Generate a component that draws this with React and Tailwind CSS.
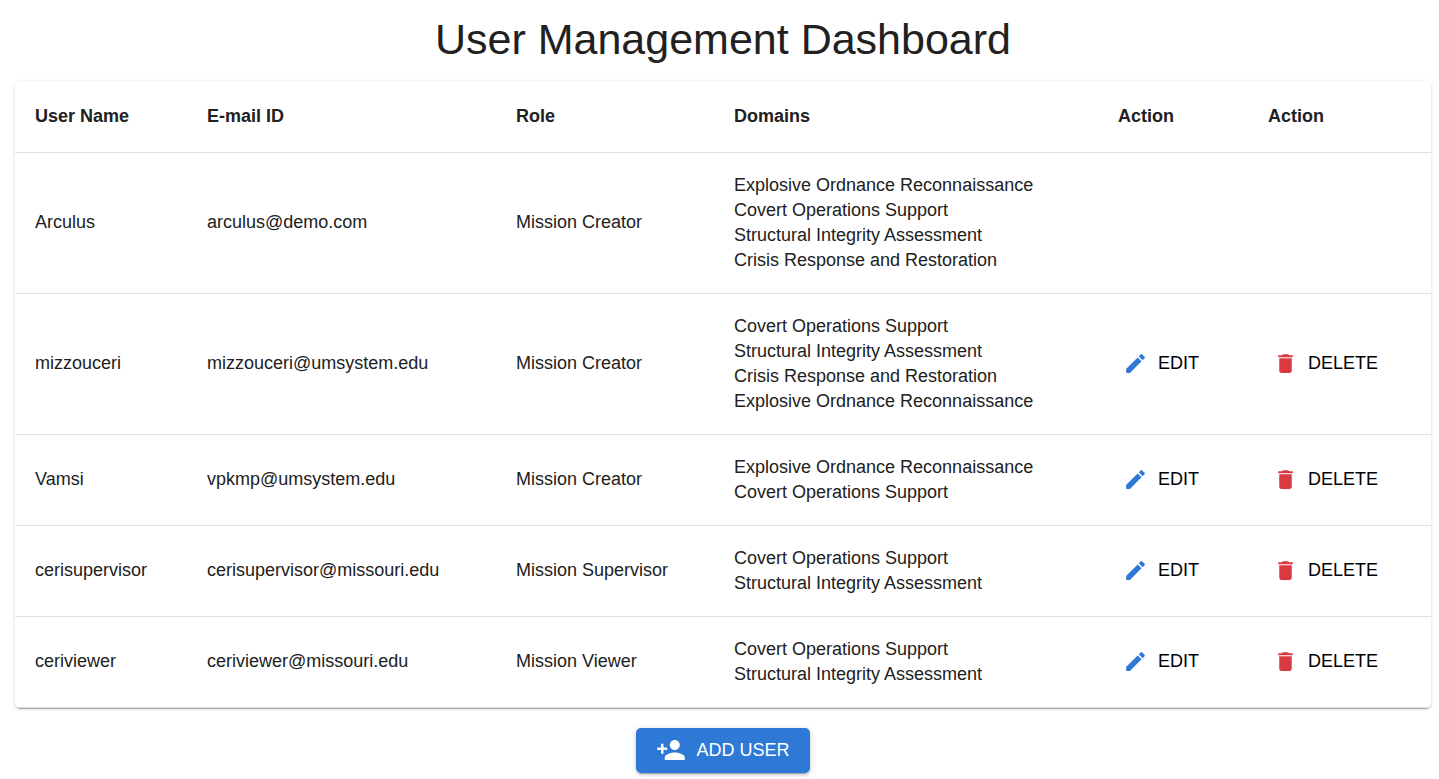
import React from "react";

const users = [
  {
    name: "Arculus",
    email: "arculus@demo.com",
    role: "Mission Creator",
    domains: [
      "Explosive Ordnance Reconnaissance",
      "Covert Operations Support",
      "Structural Integrity Assessment",
      "Crisis Response and Restoration",
    ],
    locked: true,
  },
  {
    name: "mizzouceri",
    email: "mizzouceri@umsystem.edu",
    role: "Mission Creator",
    domains: [
      "Covert Operations Support",
      "Structural Integrity Assessment",
      "Crisis Response and Restoration",
      "Explosive Ordnance Reconnaissance",
    ],
  },
  {
    name: "Vamsi",
    email: "vpkmp@umsystem.edu",
    role: "Mission Creator",
    domains: ["Explosive Ordnance Reconnaissance", "Covert Operations Support"],
  },
  {
    name: "cerisupervisor",
    email: "cerisupervisor@missouri.edu",
    role: "Mission Supervisor",
    domains: ["Covert Operations Support", "Structural Integrity Assessment"],
  },
  {
    name: "ceriviewer",
    email: "ceriviewer@missouri.edu",
    role: "Mission Viewer",
    domains: ["Covert Operations Support", "Structural Integrity Assessment"],
  },
];

const columns = [
  { label: "User Name", width: "w-[172px]" },
  { label: "E-mail ID", width: "w-[309px]" },
  { label: "Role", width: "w-[218px]" },
  { label: "Domains", width: "w-[384px]" },
  { label: "Action", width: "w-[150px]" },
  { label: "Action", width: "w-[183px]" },
];

function Icon({ d, className }) {
  return (
    <svg viewBox="0 0 24 24" fill="currentColor" aria-hidden="true" className={`shrink-0 ${className}`}>
      <path d={d} />
    </svg>
  );
}

const editPath =
  "M3 17.46v3.04c0 .28.22.5.5.5h3.04c.13 0 .26-.05.35-.15L17.81 9.94l-3.75-3.75L3.15 17.1c-.1.1-.15.22-.15.36zM20.71 7.04c.39-.39.39-1.02 0-1.41l-2.34-2.34c-.39-.39-1.02-.39-1.41 0l-1.83 1.83 3.75 3.75 1.83-1.83z";
const deletePath =
  "M6 19c0 1.1.9 2 2 2h8c1.1 0 2-.9 2-2V7H6v12zM19 4h-3.5l-1-1h-5l-1 1H5v2h14V4z";
const addUserPath =
  "M15 12c2.21 0 4-1.79 4-4s-1.79-4-4-4-4 1.79-4 4 1.79 4 4 4zm-9-2V7H4v3H1v2h3v3h2v-3h3v-2H6zm9 4c-2.67 0-8 1.34-8 4v2h16v-2c0-2.66-5.33-4-8-4z";

function RowButton({ icon, color, children }) {
  return (
    <button type="button" className="flex h-[45px] items-center gap-2.5 rounded px-[5px] text-black">
      <Icon d={icon} className={`size-[25px] ${color}`} />
      {children}
    </button>
  );
}

export default function App() {
  return (
    <main className="flex flex-col items-center bg-white pt-[13px] pr-2 pb-1.5 pl-[15px] font-['Liberation_Sans',Arial,sans-serif] text-[18px] leading-[25px] text-[#212121]">
      <h1 className="text-[43px] leading-[53px]">User Management Dashboard</h1>

      <div className="mt-[15px] w-full rounded-[5px] bg-white shadow-[0_3px_1px_-2px_rgba(0,0,0,0.2),0_1px_1px_0_rgba(0,0,0,0.14),0_1px_4px_0_rgba(0,0,0,0.12)]">
        <table className="w-full table-fixed border-collapse text-left">
          <thead>
            <tr className="h-[71px] border-b border-[#e0e0e0]">
              {columns.map((column, i) => (
                <th key={i} scope="col" className={`px-5 font-bold ${column.width}`}>
                  {column.label}
                </th>
              ))}
            </tr>
          </thead>
          <tbody>
            {users.map((user) => (
              <tr key={user.name} className="border-b border-[#e0e0e0]">
                <td className="px-5 py-5">{user.name}</td>
                <td className="px-5">{user.email}</td>
                <td className="px-5">{user.role}</td>
                <td className="px-5 py-5">
                  {user.domains.map((domain) => (
                    <div key={domain}>{domain}</div>
                  ))}
                </td>
                <td className="px-5">
                  {!user.locked && (
                    <RowButton icon={editPath} color="text-[#2e79d6]">EDIT</RowButton>
                  )}
                </td>
                <td className="px-5">
                  {!user.locked && (
                    <RowButton icon={deletePath} color="text-[#d93a42]">DELETE</RowButton>
                  )}
                </td>
              </tr>
            ))}
          </tbody>
        </table>
      </div>

      <button
        type="button"
        className="mt-5 flex h-[45px] items-center gap-2.5 rounded-[5px] bg-[#2e79d6] px-5 text-white shadow-[0_4px_1px_-3px_rgba(0,0,0,0.2),0_2px_3px_0_rgba(0,0,0,0.14),0_1px_6px_0_rgba(0,0,0,0.12)]"
      >
        <Icon d={addUserPath} className="size-[30px]" />
        ADD USER
      </button>
    </main>
  );
}
